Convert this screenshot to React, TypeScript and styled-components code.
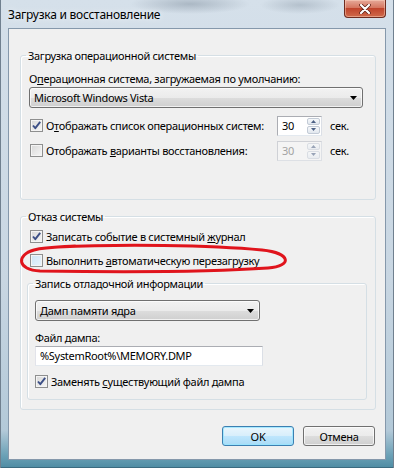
import { ReactElement, ReactNode } from 'react';
import styled, { createGlobalStyle } from 'styled-components';

const GlobalStyle = createGlobalStyle`
  html, body {
    margin: 0;
    padding: 0;
    background: #ffffff;
  }
  body {
    font-family: 'Noto Sans', 'Open Sans', Arial, sans-serif;
    font-size: 11px;
    letter-spacing: -0.3px;
    color: #000;
  }
`;

const Window = styled.div`
  position: relative;
  width: 394px;
  height: 468px;
  box-sizing: border-box;
  display: flex;
  flex-direction: column;
  padding: 0 8px 8px;
  background:
    radial-gradient(ellipse 60px 10px at 190px 4px, rgba(120, 135, 150, 0.45), transparent),
    radial-gradient(ellipse 40px 9px at 300px 5px, rgba(120, 135, 150, 0.35), transparent),
    linear-gradient(to bottom, #d5e0ea 0%, #c8d6e2 60%, #b3c9d8 92%, #6fa3b8 97%, #4e8ca3 100%);
  box-shadow: inset 1px 0 0 #70808f, inset -1px 0 0 #70808f, inset 0 -1px 0 #3b6b80;
  overflow: hidden;
`;

const TitleBar = styled.div`
  height: 28px;
  display: flex;
  justify-content: space-between;
  align-items: flex-start;
`;

const Title = styled.div`
  margin-top: 7px;
  line-height: 15px;
  font-size: 12px;
  letter-spacing: -0.25px;
  color: #000;
  text-shadow: 0 0 6px rgba(255, 255, 255, 0.9);
`;

const CloseButton = styled.div`
  width: 42px;
  height: 18px;
  box-sizing: border-box;
  display: flex;
  align-items: center;
  justify-content: center;
  border: 1px solid #6e2b1f;
  border-top: none;
  border-radius: 0 0 4px 4px;
  background: linear-gradient(to bottom, #e6a999 0%, #d57660 45%, #c0442c 50%, #cf6a4a 100%);
  box-shadow: inset 0 0 0 1px rgba(255, 220, 200, 0.45);
`;

const Client = styled.div`
  flex: 1;
  display: flex;
  flex-direction: column;
  border: 1px solid #8598ab;
  background: #f0f0f0;
  padding: 19px 9px 0 11px;
`;

const Group = styled.fieldset<{ $pl: number; $pr: number; $pb: number; $mt?: number }>`
  margin: ${({ $mt }) => $mt ?? 0}px 0 0;
  padding: 0 ${({ $pr }) => $pr}px ${({ $pb }) => $pb}px ${({ $pl }) => $pl}px;
  border: 1px solid #d5dfe5;
  border-radius: 3px;
  box-shadow: inset 1px 1px 0 #ffffff;
  min-width: 0;
`;

const Legend = styled.legend<{ $ml: number }>`
  margin-left: ${({ $ml }) => $ml}px;
  padding: 0 2px;
  line-height: 15px;
`;

const Label = styled.div<{ $mt: number }>`
  margin-top: ${({ $mt }) => $mt}px;
  line-height: 15px;
`;

const Key = styled.u`
  text-decoration: underline;
  text-underline-offset: 1px;
`;

const Combo = styled.div<{ $mt: number; $width?: number }>`
  margin-top: ${({ $mt }) => $mt}px;
  width: ${({ $width }) => ($width ? `${$width}px` : 'auto')};
  height: 21px;
  box-sizing: border-box;
  display: flex;
  align-items: center;
  justify-content: space-between;
  padding: 0 5px 0 4px;
  border: 1px solid #707070;
  border-radius: 3px;
  background: linear-gradient(to bottom, #f2f2f2 0%, #ebebeb 50%, #dddddd 51%, #cfcfcf 100%);
  box-shadow: inset 0 0 0 1px rgba(255, 255, 255, 0.7);
`;

const SpinRow = styled.div<{ $mt: number }>`
  margin-top: ${({ $mt }) => $mt}px;
  display: grid;
  grid-template-columns: 248px 45px auto;
  align-items: center;
  height: 21px;
`;

const CheckLabel = styled.label<{ $ml?: number }>`
  display: flex;
  align-items: center;
  gap: 3px;
  margin-left: ${({ $ml }) => $ml ?? 0}px;
  line-height: 15px;
  white-space: nowrap;
`;

const CheckRow = styled.div<{ $mt: number; $pl: number }>`
  margin-top: ${({ $mt }) => $mt}px;
  padding-left: ${({ $pl }) => $pl}px;
  height: 17px;
  display: flex;
  align-items: center;
`;

const Box = styled.span<{ $hot?: boolean }>`
  width: 13px;
  height: 13px;
  box-sizing: border-box;
  flex: none;
  display: flex;
  align-items: center;
  justify-content: center;
  border: 1px solid #8e8f8f;
  background: ${({ $hot }) =>
    $hot
      ? 'linear-gradient(135deg, #cbe4f5 0%, #eaf5fd 100%)'
      : 'linear-gradient(135deg, #d8d8d8 0%, #f6f6f6 100%)'};
  box-shadow: inset 0 0 0 1px #f4f4f4;
`;

const Spin = styled.div<{ $disabled?: boolean }>`
  height: 20px;
  box-sizing: border-box;
  display: flex;
  border: 1px solid ${({ $disabled }) => ($disabled ? '#cfd1d6' : '#abadb3')};
  border-right-color: ${({ $disabled }) => ($disabled ? '#dde0e5' : '#dbdfe6')};
  border-bottom-color: ${({ $disabled }) => ($disabled ? '#dde0e5' : '#e3e9ef')};
  background: ${({ $disabled }) => ($disabled ? '#f4f4f4' : '#ffffff')};
  color: ${({ $disabled }) => ($disabled ? '#a3a3a3' : '#000')};
`;

const SpinValue = styled.span`
  flex: 1;
  padding-left: 4px;
  line-height: 18px;
`;

const SpinButtons = styled.span<{ $disabled?: boolean }>`
  width: 15px;
  display: flex;
  flex-direction: column;
  gap: 1px;
  padding: 1px;
  box-sizing: border-box;
  opacity: ${({ $disabled }) => ($disabled ? 0.55 : 1)};
`;

const SpinArrow = styled.span`
  flex: 1;
  display: flex;
  align-items: center;
  justify-content: center;
  border: 1px solid #c3cbd6;
  border-radius: 2px;
  background: linear-gradient(to bottom, #f7f9fb, #e1e7ee);
`;

const Unit = styled.span`
  margin-left: 8px;
  line-height: 15px;
`;

const TextBox = styled.div<{ $mt: number; $width: number }>`
  margin-top: ${({ $mt }) => $mt}px;
  width: ${({ $width }) => $width}px;
  height: 20px;
  box-sizing: border-box;
  padding-left: 4px;
  line-height: 18px;
  border: 1px solid #abadb3;
  border-left-color: #e2e3ea;
  border-right-color: #dbdfe6;
  border-bottom-color: #e3e9ef;
  background: #ffffff;
`;

const ButtonRow = styled.div`
  margin-top: 16px;
  margin-right: 1px;
  display: flex;
  justify-content: flex-end;
  gap: 9px;
`;

const Button = styled.div<{ $default?: boolean }>`
  width: 72px;
  height: 20px;
  box-sizing: border-box;
  display: flex;
  align-items: center;
  justify-content: center;
  border: 1px solid ${({ $default }) => ($default ? '#3c7fb1' : '#707070')};
  border-radius: 3px;
  background: ${({ $default }) =>
    $default
      ? 'linear-gradient(to bottom, #e9f6fd 0%, #d7eefb 50%, #bee6fd 51%, #a9dbf6 100%)'
      : 'linear-gradient(to bottom, #f2f2f2 0%, #ebebeb 50%, #dddddd 51%, #cfcfcf 100%)'};
  box-shadow: inset 0 0 0 1px ${({ $default }) => ($default ? 'rgba(150, 230, 255, 0.8)' : 'rgba(255, 255, 255, 0.7)')};
`;

const Mark = styled.svg`
  position: absolute;
  left: 0;
  top: 0;
  pointer-events: none;
`;

const Arrow = (): ReactElement => (
  <svg width="7" height="4" viewBox="0 0 7 4">
    <path d="M0 0 H7 L3.5 4 Z" fill="#000" />
  </svg>
);

const Tick = (): ReactElement => (
  <svg width="11" height="11" viewBox="0 0 11 11">
    <path d="M2 5.5 L4.3 8.2 L9.2 1.8" fill="none" stroke="#3c4f86" strokeWidth="1.9" strokeLinejoin="round" />
  </svg>
);

const Check = ({ on, hot }: { on?: boolean; hot?: boolean }): ReactElement => (
  <Box $hot={hot}>{on && <Tick />}</Box>
);

const SpinBox = ({ disabled }: { disabled?: boolean }): ReactElement => (
  <Spin $disabled={disabled}>
    <SpinValue>30</SpinValue>
    <SpinButtons $disabled={disabled}>
      <SpinArrow>
        <svg width="5" height="3" viewBox="0 0 5 3">
          <path d="M0 3 L2.5 0 L5 3 Z" fill="#4d6185" />
        </svg>
      </SpinArrow>
      <SpinArrow>
        <svg width="5" height="3" viewBox="0 0 5 3">
          <path d="M0 0 L5 0 L2.5 3 Z" fill="#4d6185" />
        </svg>
      </SpinArrow>
    </SpinButtons>
  </Spin>
);

const Option = ({ children, on, hot, ml }: { children: ReactNode; on?: boolean; hot?: boolean; ml?: number }): ReactElement => (
  <CheckLabel $ml={ml}>
    <Check on={on} hot={hot} />
    <span>{children}</span>
  </CheckLabel>
);

const App = (): ReactElement => {
  return (
    <>
      <GlobalStyle />
      <Window>
        <TitleBar>
          <Title>Загрузка и восстановление</Title>
          <CloseButton>
            <svg width="12" height="10" viewBox="0 0 12 10">
              <path d="M2 1 L10 9 M10 1 L2 9" stroke="#5a1e14" strokeWidth="3.6" strokeLinecap="round" />
              <path d="M2 1 L10 9 M10 1 L2 9" stroke="#ffffff" strokeWidth="2.2" strokeLinecap="round" />
            </svg>
          </CloseButton>
        </TitleBar>
        <Client>
          <Group $pl={8} $pr={12} $pb={38}>
            <Legend $ml={-3}>Загрузка операционной системы</Legend>
            <Label $mt={8}>
              О<Key>п</Key>ерационная система, загружаемая по умолчанию:
            </Label>
            <Combo $mt={1}>
              <span>Microsoft Windows Vista</span>
              <Arrow />
            </Combo>
            <SpinRow $mt={7}>
              <Option on ml={1}>
                О<Key>т</Key>ображать список операционных систем:
              </Option>
              <SpinBox />
              <Unit>сек.</Unit>
            </SpinRow>
            <SpinRow $mt={4}>
              <Option ml={1}>
                Отображать <Key>в</Key>арианты восстановления:
              </Option>
              <SpinBox disabled />
              <Unit>сек.</Unit>
            </SpinRow>
          </Group>

          <Group $pl={6} $pr={8} $pb={9} $mt={9}>
            <Legend $ml={-1}>Отказ системы</Legend>
            <CheckRow $mt={4} $pl={3}>
              <Option on>
                Записать событие в системный <Key>ж</Key>урнал
              </Option>
            </CheckRow>
            <CheckRow $mt={7} $pl={3}>
              <Option hot>
                Выполнить <Key>а</Key>втоматическую перезагрузку
              </Option>
            </CheckRow>
            <Group $pl={7} $pr={8} $pb={9} $mt={7}>
              <Legend $ml={-2}>Запись отладочной информации</Legend>
              <Combo $mt={9} $width={225}>
                <span>Дамп памяти ядра</span>
                <Arrow />
              </Combo>
              <Label $mt={9}>Файл дампа:</Label>
              <TextBox $mt={1} $width={228}>%SystemRoot%\MEMORY.DMP</TextBox>
              <CheckRow $mt={7} $pl={0}>
                <Option on>
                  Заменять <Key>с</Key>уществующий файл дампа
                </Option>
              </CheckRow>
            </Group>
          </Group>

          <ButtonRow>
            <Button $default>OK</Button>
            <Button>Отмена</Button>
          </ButtonRow>
        </Client>
        <Mark width="394" height="468" viewBox="0 0 394 468">
          <path
            d="M58 247 C 120 244, 210 245, 262 250 C 291 253, 293 266, 268 268 C 210 272, 110 272, 40 271 C 17 270, 16 255, 34 250 C 46 247, 60 247, 75 246"
            fill="none"
            stroke="#e0141c"
            strokeWidth="3"
            strokeLinecap="round"
            strokeLinejoin="round"
          />
        </Mark>
      </Window>
    </>
  );
};

export default App;
